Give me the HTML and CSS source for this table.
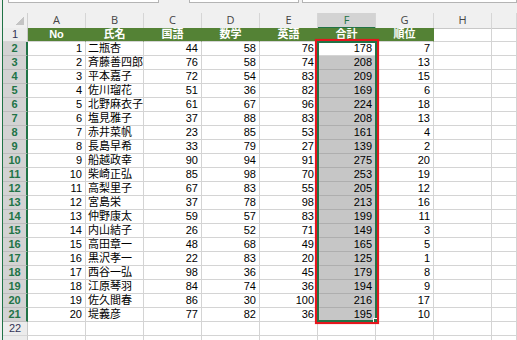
FILE: index.html
```html
<!DOCTYPE html>
<html lang="ja">
<head>
<meta charset="utf-8">
<title>Sheet</title>
<link rel="stylesheet" href="styles.css">
</head>
<body>
<div class="app">
  <div class="edge"></div>
  <div class="main">
    <div class="fbar">
      <div class="box b1"></div>
      <div class="box b2"></div>
      <div class="box b3"></div>
    </div>
    <div class="sheet">
      <div class="row hdr">
        <div class="corner"></div>
        <div class="ch">A</div><div class="ch">B</div><div class="ch">C</div><div class="ch">D</div><div class="ch">E</div><div class="ch s">F</div><div class="ch">G</div><div class="ch">H</div><div class="ch"></div>
      </div>
      <div class="row">
        <div class="rh">1</div>
        <div class="c g">No</div><div class="c g">氏名</div><div class="c g">国語</div><div class="c g">数学</div><div class="c g">英語</div><div class="c g">合計</div><div class="c g">順位</div><div class="c"></div><div class="c"></div>
      </div>
      <div class="row"><div class="rh s">2</div><div class="c n">1</div><div class="c">二瓶杏</div><div class="c n">44</div><div class="c n">58</div><div class="c n">76</div><div class="c n fa">178</div><div class="c n">7</div><div class="c"></div><div class="c"></div></div>
      <div class="row"><div class="rh s">3</div><div class="c n">2</div><div class="c">斉藤善四郎</div><div class="c n">76</div><div class="c n">58</div><div class="c n">74</div><div class="c n f">208</div><div class="c n">13</div><div class="c"></div><div class="c"></div></div>
      <div class="row"><div class="rh s">4</div><div class="c n">3</div><div class="c">平本嘉子</div><div class="c n">72</div><div class="c n">54</div><div class="c n">83</div><div class="c n f">209</div><div class="c n">15</div><div class="c"></div><div class="c"></div></div>
      <div class="row"><div class="rh s">5</div><div class="c n">4</div><div class="c">佐川瑠花</div><div class="c n">51</div><div class="c n">36</div><div class="c n">82</div><div class="c n f">169</div><div class="c n">6</div><div class="c"></div><div class="c"></div></div>
      <div class="row"><div class="rh s">6</div><div class="c n">5</div><div class="c">北野麻衣子</div><div class="c n">61</div><div class="c n">67</div><div class="c n">96</div><div class="c n f">224</div><div class="c n">18</div><div class="c"></div><div class="c"></div></div>
      <div class="row"><div class="rh s">7</div><div class="c n">6</div><div class="c">塩見雅子</div><div class="c n">37</div><div class="c n">88</div><div class="c n">83</div><div class="c n f">208</div><div class="c n">13</div><div class="c"></div><div class="c"></div></div>
      <div class="row"><div class="rh s">8</div><div class="c n">7</div><div class="c">赤井菜帆</div><div class="c n">23</div><div class="c n">85</div><div class="c n">53</div><div class="c n f">161</div><div class="c n">4</div><div class="c"></div><div class="c"></div></div>
      <div class="row"><div class="rh s">9</div><div class="c n">8</div><div class="c">長島早希</div><div class="c n">33</div><div class="c n">79</div><div class="c n">27</div><div class="c n f">139</div><div class="c n">2</div><div class="c"></div><div class="c"></div></div>
      <div class="row"><div class="rh s">10</div><div class="c n">9</div><div class="c">船越政幸</div><div class="c n">90</div><div class="c n">94</div><div class="c n">91</div><div class="c n f">275</div><div class="c n">20</div><div class="c"></div><div class="c"></div></div>
      <div class="row"><div class="rh s">11</div><div class="c n">10</div><div class="c">柴崎正弘</div><div class="c n">85</div><div class="c n">98</div><div class="c n">70</div><div class="c n f">253</div><div class="c n">19</div><div class="c"></div><div class="c"></div></div>
      <div class="row"><div class="rh s">12</div><div class="c n">11</div><div class="c">高梨里子</div><div class="c n">67</div><div class="c n">83</div><div class="c n">55</div><div class="c n f">205</div><div class="c n">12</div><div class="c"></div><div class="c"></div></div>
      <div class="row"><div class="rh s">13</div><div class="c n">12</div><div class="c">宮島栄</div><div class="c n">37</div><div class="c n">78</div><div class="c n">98</div><div class="c n f">213</div><div class="c n">16</div><div class="c"></div><div class="c"></div></div>
      <div class="row"><div class="rh s">14</div><div class="c n">13</div><div class="c">仲野康太</div><div class="c n">59</div><div class="c n">57</div><div class="c n">83</div><div class="c n f">199</div><div class="c n">11</div><div class="c"></div><div class="c"></div></div>
      <div class="row"><div class="rh s">15</div><div class="c n">14</div><div class="c">内山結子</div><div class="c n">26</div><div class="c n">52</div><div class="c n">71</div><div class="c n f">149</div><div class="c n">3</div><div class="c"></div><div class="c"></div></div>
      <div class="row"><div class="rh s">16</div><div class="c n">15</div><div class="c">高田章一</div><div class="c n">48</div><div class="c n">68</div><div class="c n">49</div><div class="c n f">165</div><div class="c n">5</div><div class="c"></div><div class="c"></div></div>
      <div class="row"><div class="rh s">17</div><div class="c n">16</div><div class="c">黒沢孝一</div><div class="c n">22</div><div class="c n">83</div><div class="c n">20</div><div class="c n f">125</div><div class="c n">1</div><div class="c"></div><div class="c"></div></div>
      <div class="row"><div class="rh s">18</div><div class="c n">17</div><div class="c">西谷一弘</div><div class="c n">98</div><div class="c n">36</div><div class="c n">45</div><div class="c n f">179</div><div class="c n">8</div><div class="c"></div><div class="c"></div></div>
      <div class="row"><div class="rh s">19</div><div class="c n">18</div><div class="c">江原琴羽</div><div class="c n">84</div><div class="c n">74</div><div class="c n">36</div><div class="c n f">194</div><div class="c n">9</div><div class="c"></div><div class="c"></div></div>
      <div class="row"><div class="rh s">20</div><div class="c n">19</div><div class="c">佐久間春</div><div class="c n">86</div><div class="c n">30</div><div class="c n">100</div><div class="c n f">216</div><div class="c n">17</div><div class="c"></div><div class="c"></div></div>
      <div class="row"><div class="rh s">21</div><div class="c n">20</div><div class="c">堤義彦</div><div class="c n">77</div><div class="c n">82</div><div class="c n">36</div><div class="c n f">195</div><div class="c n">10</div><div class="c"></div><div class="c"></div></div>
      <div class="row"><div class="rh">22</div><div class="c"></div><div class="c"></div><div class="c"></div><div class="c"></div><div class="c"></div><div class="c"></div><div class="c"></div><div class="c"></div><div class="c"></div></div>
      <div class="row"><div class="rh"></div><div class="c"></div><div class="c"></div><div class="c"></div><div class="c"></div><div class="c"></div><div class="c"></div><div class="c"></div><div class="c"></div><div class="c"></div></div>
    </div>
  </div>
  <div class="sel"><div class="handle"></div></div>
  <div class="mark"></div>
</div>
</body>
</html>
```
FILE: styles.css
```css
* { box-sizing: border-box; }
html, body { margin: 0; padding: 0; }
body {
  width: 517px;
  height: 340px;
  overflow: hidden;
  background: #fff;
  font-family: "Liberation Sans", "Noto Sans CJK JP", sans-serif;
}
.app {
  position: relative;
  display: flex;
  width: 517px;
  height: 340px;
  overflow: hidden;
}
.edge {
  flex: 0 0 3px;
  background: #f0f0f0;
  border-right: 1px solid #217346;
}
.main {
  flex: 1;
  min-width: 0;
  display: flex;
  flex-direction: column;
  background: #f0f0f0;
}
.fbar {
  flex: 0 0 13px;
  display: flex;
  align-items: flex-start;
  background: #f0f0f0;
}
.box {
  height: 3px;
  background: #fff;
  border: 1px solid #b4b4b4;
  border-top: none;
}
.b1 { margin-left: 5px; width: 151px; }
.b2 { margin-left: 30px; width: 110px; }
.b3 { margin-left: 3px; flex: 1; }
.sheet {
  flex: 1;
  display: flex;
  flex-direction: column;
  background: #fff;
  overflow: hidden;
}
.row {
  flex: 0 0 14px;
  display: grid;
  grid-template-columns: 25px repeat(8, 58px) 1fr;
  height: 14px;
}
.row.hdr {
  flex: 0 0 15px;
  height: 15px;
  background: #f0f0f0;
}
.corner {
  border-right: 1px solid #d0d0d0;
  border-bottom: 1px solid #c8c8c8;
  background: linear-gradient(to bottom right, transparent 50%, #c4c4c4 50%) no-repeat right 3px bottom 3px / 8px 8px, #f0f0f0;
}
.ch {
  background: #f0f0f0;
  border-right: 1px solid #d6d6d6;
  border-bottom: 1px solid #c8c8c8;
  font-family: "Open Sans", "Noto Sans", sans-serif;
  font-size: 11px;
  line-height: 14px;
  color: #444;
  text-align: center;
}
.ch.s {
  background: #d3d3d3;
  color: #217346;
  border-bottom: 2px solid #217346;
}
.rh {
  background: #ececec;
  border-right: 1px solid #c8c8c8;
  border-bottom: 1px solid #d6d6d6;
  font-family: "Liberation Sans", sans-serif;
  font-size: 11px;
  line-height: 13px;
  color: #333355;
  text-align: center;
}
.rh.s {
  background: #d3d3d3;
  color: #217346;
  font-weight: bold;
  border-right: 2px solid #217346;
  border-bottom-color: #bdbdbd;
}
.c {
  border-right: 1px solid #d4d4d4;
  border-bottom: 1px solid #d4d4d4;
  font-size: 11px;
  line-height: 13px;
  padding: 0 2px 0 2px;
  color: #000;
  white-space: nowrap;
}
.n { text-align: right; padding-right: 3px; }
.g {
  background: #548235;
  color: #fff;
  font-weight: bold;
  text-align: center;
  border-right-color: #548235;
}
.f {
  background: #c6c6c6;
  border-bottom-color: #aeaeae;
}
.sel {
  position: absolute;
  left: 317px;
  top: 41px;
  width: 60px;
  height: 281px;
  border: 2px solid #217346;
}
.handle {
  position: absolute;
  right: -4px;
  bottom: -4px;
  width: 6px;
  height: 6px;
  background: #217346;
  border: 1px solid #fff;
}
.mark {
  position: absolute;
  left: 315px;
  top: 39px;
  width: 64px;
  height: 285px;
  border: 2px solid #e5161d;
  box-shadow: 0 0 1px rgba(229, 22, 29, 0.5);
}
```
